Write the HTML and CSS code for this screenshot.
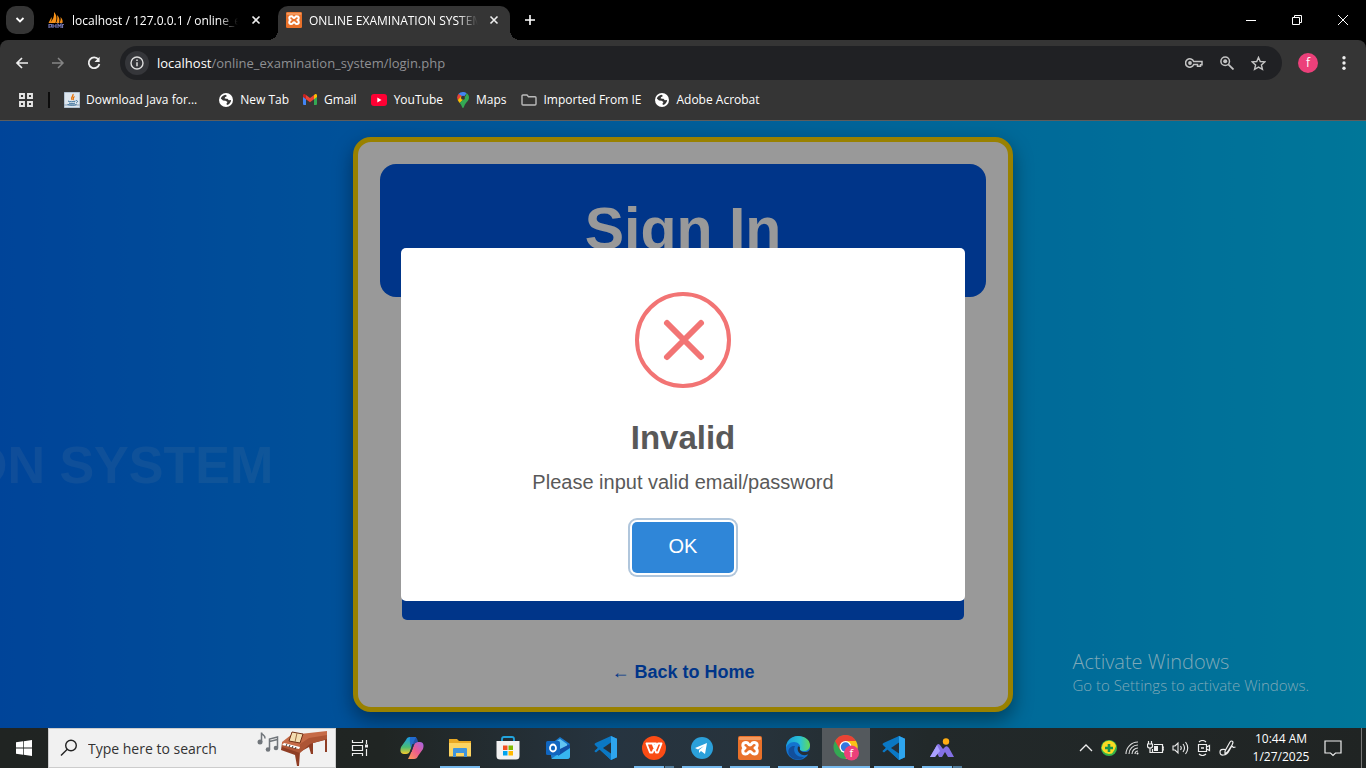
FILE: index.html
```html
<!DOCTYPE html>
<html lang="en">
<head>
<meta charset="utf-8">
<title>ONLINE EXAMINATION SYSTEM</title>
<link rel="stylesheet" href="styles.css">
</head>
<body>
<svg class="defs" width="0" height="0" aria-hidden="true">
  <defs>
    <symbol id="globe" viewBox="0 0 14 14"><circle cx="7" cy="7" r="7" fill="#fff"/><path d="M1.800 5.500C2.500 3.500 4.500 2 6.500 1.800L8 3 6 4.200l-.3 1.300 2.800.2 1.300 1.500 2.300-.2c0 2.500-2 4.700-4.200 5L7.500 10.500 8.500 9 6.500 7.800 4 7.500z" fill="#353535"/><path d="M5.800 4.800l1-.9 1.900.3-.6 1.200z" fill="#fff"/></symbol>
    <symbol id="xampp" viewBox="0 0 24 24"><rect width="24" height="24" rx="2" fill="#e9712a"/><rect x="1" y="1" width="22" height="3" rx="1" fill="#f39a5f"/><path d="M8 6.500C4 6.500 4 11 7 12c-3 1-3 6 .5 6 3 0 2.500-2.500 4.500-2.500s1.500 2.500 4.500 2.500c3.500 0 3.500-5 .5-6 3-1 3-5.500-1-5.500-3 0-2 2.500-4 2.500s-1-2.500-4-2.500z" fill="none" stroke="#fff" stroke-width="3" stroke-linejoin="round"/></symbol>
    <symbol id="vscode" viewBox="0 0 24 24"><path d="M17 0l6 2.700v18.600L17 24 5.500 13.300 2 16l-1.600-1L5 11 .4 8 2 6.800z" fill="#0b78c4"/><path d="M5.500 10.500L17 0v6.500L9 12l8 5.500V24L5.500 13.500 2 16.500.5 15.500 4 12 .5 8.500 2 7.500z" fill="#0b78c4"/><path d="M17 6.500L9 12l8 5.500z" fill="#25303a"/><path d="M17 0l6 2.700v18.600L17 24z" fill="#2ea5ee"/></symbol>
    <symbol id="close" viewBox="0 0 10 10"><path d="M1.500 1.500l7 7m0-7l-7 7" stroke="#eee" stroke-width="1.600"/></symbol>
  </defs>
</svg>

<header class="browser">
  <div class="tabstrip">
    <button class="tab-search" aria-label="Search tabs"><svg width="10" height="8" viewBox="0 0 10 8"><path d="M1.500 2L5 5.500 8.500 2" fill="none" stroke="#fff" stroke-width="1.800"/></svg></button>
    <div class="tab">
      <svg width="16" height="16" viewBox="0 0 16 16"><path d="M6 0c3 3 3 7 1.500 11H2C5 8 6.500 4 6 0zM9 3c2.500 2 3 5 2 8H8c1.500-3 1.500-5 1-8zM12.500 5c2 2 2.500 4 2 6h-3c1-2 1.500-4 1-6zM3.500 5L.5 11H2c1.500-2 2-4 1.500-6z" fill="#f79117"/><path d="M1 16v-3.500h2.500V15H1m4-3v4m0-2h3m0-2v4m2 0v-4l1.500 2 1.500-2v4m1.500 0v-3.500H16" fill="none" stroke="#6d70ab" stroke-width="1.200"/></svg>
      <span class="tab-title">localhost / 127.0.0.1 / online_ex</span>
      <button class="plain tab-close" aria-label="Close tab"><svg width="10" height="10"><use href="#close"/></svg></button>
    </div>
    <div class="tab tab-active">
      <svg width="16" height="16"><use href="#xampp"/></svg>
      <span class="tab-title">ONLINE EXAMINATION SYSTEM</span>
      <button class="plain tab-close" aria-label="Close tab"><svg width="10" height="10"><use href="#close"/></svg></button>
    </div>
    <button class="plain new-tab" aria-label="New tab"><svg width="12" height="12" viewBox="0 0 12 12"><path d="M6 1v10M1 6h10" stroke="#fff" stroke-width="1.600"/></svg></button>
    <div class="window-controls">
      <button class="plain" aria-label="Minimize"><svg width="10" height="10"><path d="M0 5.500h10" stroke="#fff"/></svg></button>
      <button class="plain" aria-label="Restore"><svg width="10" height="10"><path d="M.5 2.500h7v7h-7zM2.500 2.500v-2h7v7h-2" fill="none" stroke="#fff"/></svg></button>
      <button class="plain" aria-label="Close window"><svg width="10" height="10"><path d="M0 0l10 10M10 0L0 10" stroke="#fff"/></svg></button>
    </div>
  </div>

  <div class="toolbar">
    <nav class="nav-buttons">
      <button class="plain" aria-label="Back"><svg width="14" height="12" viewBox="0 0 14 12"><path d="M13 6H2m5-5L2 6l5 5" fill="none" stroke="#eee" stroke-width="1.700"/></svg></button>
      <button class="plain" aria-label="Forward"><svg width="14" height="12" viewBox="0 0 14 12"><path d="M1 6h11M7 1l5 5-5 5" fill="none" stroke="#858585" stroke-width="1.500"/></svg></button>
      <button class="plain" aria-label="Reload"><svg width="14" height="14" viewBox="0 0 14 14"><path d="M11.500 3.600A5.400 5.400 0 1 0 12.400 8" fill="none" stroke="#eee" stroke-width="1.800"/><path d="M12.600.8v5.100H7.500z" fill="#eee"/></svg></button>
    </nav>
    <div class="omnibox">
      <button class="site-info" aria-label="View site information"><svg width="14" height="14" viewBox="0 0 14 14"><circle cx="7" cy="7" r="6" fill="none" stroke="#ddd" stroke-width="1.400"/><path d="M7 6.200v4M7 3.500v1.500" stroke="#ddd" stroke-width="1.500"/></svg></button>
      <p class="url"><b>localhost</b>/online_examination_system/login.php</p>
      <button class="plain" aria-label="Passwords"><svg width="18" height="10" viewBox="0 0 18 10"><path d="M8.700 3.500H17v3.200h-1.500v1.500h-3V6.500H8.700A4.200 4.200 0 1 1 8.700 3.500z" fill="none" stroke="#c4c4c4" stroke-width="1.500"/><circle cx="5" cy="5" r="1.900" fill="#c4c4c4"/></svg></button>
      <button class="plain" aria-label="Zoom"><svg width="14" height="14" viewBox="0 0 14 14"><circle cx="5.200" cy="5.200" r="4.300" fill="none" stroke="#c4c4c4" stroke-width="1.500"/><circle cx="5.200" cy="5.200" r="2" fill="#c4c4c4"/><path d="M8.300 8.300L13.500 13.500" stroke="#c4c4c4" stroke-width="1.800"/></svg></button>
      <button class="plain" aria-label="Bookmark this page"><svg width="15" height="15" viewBox="0 0 16 16"><path d="M8 1.500l1.900 4.400 4.800.4-3.600 3.200 1.100 4.800L8 11.800l-4.200 2.500 1.100-4.800L1.300 6.300l4.800-.4z" fill="none" stroke="#c4c4c4" stroke-width="1.500"/></svg></button>
    </div>
    <button class="avatar" aria-label="Profile">f</button>
    <button class="plain menu" aria-label="Menu"><svg width="4" height="14" viewBox="0 0 4 14"><g fill="#eee"><circle cx="2" cy="1.800" r="1.700"/><circle cx="2" cy="7" r="1.700"/><circle cx="2" cy="12.200" r="1.700"/></g></svg></button>
  </div>

  <nav class="bookmarks">
    <button class="plain apps" aria-label="Apps"><svg width="14" height="14" viewBox="0 0 14 14"><path d="M1 1h4v4H1zM9 1h4v4H9zM1 9h4v4H1zM9 9h4v4H9z" fill="none" stroke="#e4e4e4" stroke-width="1.900"/></svg></button>
    <span class="divider"></span>
    <a class="bookmark bookmark-wide" href="#"><svg width="16" height="16" viewBox="0 0 16 16"><path d="M0 0h16v16H0z" fill="#dde6ee"/><path d="M0 0h16v16H0zM0 13h16" fill="none" stroke="#8ba0b5"/><path d="M9 2c1 2-3 3-1 6M10.500 4.500C8 6 10 7 9 8" fill="none" stroke="#e76f00" stroke-width="1.300"/><path d="M4 9c1 1 6 1 7.500 0M5 11c1 1 5 1 6 0M3.500 12.500c3 1 7 1 9 0M12 8.500c2 0 2 1.500 0 2.500" fill="none" stroke="#39709b"/></svg>Download Java for...</a>
    <a class="bookmark" href="#"><svg width="14" height="14"><use href="#globe"/></svg>New Tab</a>
    <a class="bookmark" href="#"><svg width="14" height="11" viewBox="0 0 14 11"><path d="M0 1.500L3 3v8H1a1 1 0 0 1-1-1z" fill="#4285f4"/><path d="M14 1.500L11 3v8h2a1 1 0 0 0 1-1z" fill="#34a853"/><path d="M11 1l1-.7c1-.7 2 0 2 1.200V3l-3 2.300z" fill="#fbbc04"/><path d="M3 1L2 .3C1 -.4 0 .3 0 1.500V3l3 2.300z" fill="#c5221f"/><path d="M3 1l4 3 4-3v4.300l-4 3-4-3z" fill="#ea4335"/></svg>Gmail</a>
    <a class="bookmark" href="#"><svg width="16" height="12" viewBox="0 0 16 12"><rect width="16" height="12" rx="3" fill="#ff0033"/><path d="M6.300 3.500v5L10.500 6z" fill="#fff"/></svg>YouTube</a>
    <a class="bookmark" href="#"><svg width="12" height="16" viewBox="0 0 12 16"><path d="M6 0a6 6 0 0 0-4.600 2.100L6 6l3.700-4.700A6 6 0 0 0 6 0z" fill="#4285f4"/><path d="M1.400 2.100A6 6 0 0 0 .7 8L5 4z" fill="#ea4335"/><path d="M.7 8c.5 1.100 1.200 2 2 3L9 5 4 4.500z" fill="#fbbc04"/><path d="M9.700 1.300L7.500 6 2.700 11C5 13.500 5 16 6 16s1-2.500 3-5c1.500-1.800 3-3 3-5.500 0-2-1-3.300-2.300-4.200z" fill="#34a853"/><circle cx="6" cy="5.700" r="2" fill="#353535"/></svg>Maps</a>
    <a class="bookmark" href="#"><svg width="16" height="12" viewBox="0 0 16 12"><path d="M1 2a1 1 0 0 1 1-1h4l1.500 1.800H14a1 1 0 0 1 1 1V10a1 1 0 0 1-1 1H2a1 1 0 0 1-1-1z" fill="none" stroke="#bbb" stroke-width="1.400"/></svg>Imported From IE</a>
    <a class="bookmark" href="#"><svg width="14" height="14"><use href="#globe"/></svg>Adobe Acrobat</a>
  </nav>
</header>

<main class="page">
  <div class="marquee" aria-hidden="true">ONLINE EXAMINATION SYSTEM</div>
  <section class="card">
    <h1 class="card-title">Sign In</h1>
    <form class="login-form"><button class="submit" type="submit" aria-label="Sign in"></button></form>
    <p class="back"><a href="#"><span class="arrow">←</span> Back to Home</a></p>
  </section>

  <div class="overlay">
    <div class="modal" role="alertdialog" aria-labelledby="modal-title" aria-describedby="modal-text">
      <svg class="modal-icon" width="96" height="96" viewBox="0 0 96 96"><circle cx="48" cy="48" r="46" fill="none" stroke="#f27474" stroke-width="4"/><path d="M32 31l34 34M66 31L32 65" stroke="#f27474" stroke-width="6" stroke-linecap="round"/></svg>
      <h2 id="modal-title">Invalid</h2>
      <p id="modal-text">Please input valid email/password</p>
      <button class="ok">OK</button>
    </div>
  </div>

  <aside class="activate">
    <strong>Activate Windows</strong>
    <span>Go to Settings to activate Windows.</span>
  </aside>
</main>

<footer class="taskbar">
  <button class="plain task" aria-label="Start"><svg width="16" height="16" viewBox="0 0 16 16"><path d="M0 2.300l7-1v6.300H0zM7.700 1.200L16 0v7.600H7.700zM0 8.400h7v6.300l-7-1zM7.700 8.400H16V16l-8.300-1.200z" fill="#fff"/></svg></button>
  <div class="search">
    <svg width="18" height="18" viewBox="0 0 18 18"><circle cx="11" cy="6.500" r="5.300" fill="none" stroke="#222" stroke-width="1.400"/><path d="M7.300 10.300L1 16.500" stroke="#222" stroke-width="1.400"/></svg>
    <input type="text" placeholder="Type here to search" aria-label="Type here to search">
    <svg width="72" height="36" viewBox="0 0 72 36"><path d="M5.500 12V2.500c0 3 4 2 3.500 6M13.500 19V9l8-2v10.500M13.500 11.500l8-2" fill="none" stroke="#71767b" stroke-width="1.500"/><g fill="#71767b"><circle cx="4" cy="12" r="2.500"/><circle cx="12" cy="19.500" r="2.300"/><circle cx="20" cy="18" r="2.300"/></g><path d="M26 13l-1 7 14 5 2 11h2l1-14 9-5 2 7h2V13l12-3v12h2V4z" fill="#8f3d24"/><path d="M26 12l9-7 36-4v6l-18 4-9 9-18-5z" fill="#c66b48"/><path d="M44 14l9-6 18-3v4l-17 5-10 9-18-6v-3l18 5z" fill="#ad5535"/><path d="M36 2l11 2-3 9-11-2z" fill="#f4ddb1" stroke="#723016"/><path d="M41 3l-2 9" stroke="#9b6c42"/><path d="M28 13l16 4-1 2-17-4z" fill="#fff"/><path d="M31 14l-1 2m4-1l-1 2m4-1l-1 2m4-1l-1 2" stroke="#333"/></svg>
  </div>
  <button class="plain task task-view" aria-label="Task view"><svg width="18" height="18" viewBox="0 0 18 18"><path d="M1.500 1v2.500h10V1M1.500 17v-2.500h10V17M1.500 6.500h10v5h-10zM15.500 1v4M15.500 10v7" fill="none" stroke="#eee" stroke-width="1.200"/><rect x="14" y="5.500" width="3" height="3" fill="#eee"/></svg></button>
  <button class="plain task" aria-label="Copilot"><svg width="24" height="24" viewBox="0 0 24 24"><defs><linearGradient id="cp1" x1="0" y1="0" x2="0" y2="1"><stop offset="0" stop-color="#1a9bea"/><stop offset=".6" stop-color="#4bbd72"/><stop offset="1" stop-color="#f6c92b"/></linearGradient><linearGradient id="cp2" x1="1" y1="0" x2="0" y2="1"><stop offset="0" stop-color="#a165e8"/><stop offset=".5" stop-color="#ec5c8e"/><stop offset="1" stop-color="#ff9c53"/></linearGradient></defs><path d="M6 4q1-3 4-3h6l-2 4-4 10q-1 3-4 3H4c-4 0-4-4-3-7z" fill="url(#cp1)"/><path d="M18 20q-1 3-4 3H8l2-4 4-10q1-3 4-3h2c4 0 4 4 3 7z" fill="url(#cp2)"/><path d="M10 1h5q2 0 3 5-3 0-4 3l-2 5q-3-7-2-13z" fill="#225fcd" opacity=".8"/><path d="M12.500 8l-2.500 8h1.500L14 8z" fill="#263038"/></svg></button>
  <button class="plain task running" aria-label="File Explorer"><svg width="22" height="20" viewBox="0 0 22 20"><path d="M0 1h8l2 2h12v15H0z" fill="#e8a824"/><path d="M0 5h22v13.500H0z" fill="#fcd462"/><path d="M4 19v-8q0-1 1-1h12q1 0 1 1v8h-3v-4H7v4z" fill="#3f94dc"/></svg></button>
  <button class="plain task store" aria-label="Microsoft Store"><svg width="24" height="24" viewBox="0 0 24 24"><path d="M6 7V3q0-2 2-2h8q2 0 2 2v4" fill="none" stroke="#22a4dd" stroke-width="1.800"/><path d="M.5 5h23v15q0 3.500-3.500 3.500H4Q.5 23.500.5 20z" fill="#f2f2f2"/><path d="M7 9.500h4.500V14H7z" fill="#f25022"/><path d="M12.500 9.500H17V14h-4.500z" fill="#7fba00"/><path d="M7 15h4.500v4.500H7z" fill="#00a4ef"/><path d="M12.500 15H17v4.500h-4.500z" fill="#ffb900"/></svg></button>
  <button class="plain task" aria-label="Outlook"><svg width="24" height="22" viewBox="0 0 24 22"><path d="M5 7l9-7 10 7v12q0 3-3 3H8q-3 0-3-3z" fill="#1878cc"/><path d="M8 6l6-4 7 5v6H8z" fill="#62c5f2"/><path d="M5 22l19-13v10q0 3-3 3z" fill="#37b5f0"/><path d="M14 12l10-5v4L12 19z" fill="#124fa5"/><rect y="4" width="14" height="14" rx="1.500" fill="#1066c0"/><ellipse cx="7" cy="11" rx="3" ry="3.500" fill="none" stroke="#fff" stroke-width="1.800"/></svg></button>
  <button class="plain task" aria-label="Visual Studio Code"><svg width="24" height="24"><use href="#vscode"/></svg></button>
  <button class="plain task running stacked" aria-label="WPS Office"><svg width="24" height="24" viewBox="0 0 24 24"><circle cx="12" cy="12" r="12" fill="#fa4c15"/><path d="M4.500 7.500H14l-3.500 9H8zM10.500 7.500L14 16.500h2l3.500-9H16l-2.500 6" fill="none" stroke="#fff" stroke-width="1.900" stroke-linejoin="round"/></svg></button>
  <button class="plain task running" aria-label="Telegram"><svg width="22" height="22" viewBox="0 0 22 22"><circle cx="11" cy="11" r="11" fill="#2ba0da"/><path d="M4 11l12-5-2 11-4-3-2 2v-3l5-4-6 3.500z" fill="#fff"/></svg></button>
  <button class="plain task running" aria-label="XAMPP"><svg width="24" height="24"><use href="#xampp"/></svg></button>
  <button class="plain task running" aria-label="Microsoft Edge"><svg width="24" height="24" viewBox="0 0 24 24"><defs><linearGradient id="ed"><stop offset="0" stop-color="#179bdc"/><stop offset=".6" stop-color="#2bc3d2"/><stop offset="1" stop-color="#63d957"/></linearGradient></defs><circle cx="12" cy="12" r="12" fill="#1373ce"/><path d="M0 12C0 5 5 0 12 0s12 4 12 9c0 4-3 6-6 6-4 0-5-1-4-3 1-3-2-6-6-6-4 0-7 3-8 6z" fill="url(#ed)"/><path d="M9 10c-3 6 2 12 9 11-4 4-11 3-14-1C0 15 4 9 9 10z" fill="#124f9c"/><path d="M14 12c-1 3 3 5 8 3.500l2-2V19l-2.500-.5C16 21 10 16 12 10.500q2-.5 2 1.500z" fill="#263038"/></svg></button>
  <button class="plain task running active" aria-label="Google Chrome"><svg width="26" height="26" viewBox="0 0 26 26"><circle cx="12.500" cy="12" r="12" fill="#34a853"/><path d="M2.100 6A12 12 0 0 1 23 6H12.500L7 15z" fill="#ea4335"/><path d="M23 6a12 12 0 0 1-10.500 18l6-10.500L12.500 6z" fill="#fbc116"/><circle cx="12.500" cy="12" r="6" fill="#fff"/><circle cx="12.500" cy="12" r="4.700" fill="#3477df"/><circle cx="18.500" cy="18" r="7.500" fill="#ec407a"/><text x="16.500" y="22" class="badge-letter">f</text></svg></button>
  <button class="plain task running" aria-label="Visual Studio Code"><svg width="24" height="24"><use href="#vscode"/></svg></button>
  <button class="plain task running stacked" aria-label="Photos"><svg width="24" height="20" viewBox="0 0 24 20"><path d="M0 19L7 7q1-2 3 0l3 4 2-2q2-2 4 1l5 9h-6l-3-5-3 5H9l-2-4-2 4z" fill="#8471e5"/><path d="M0 19L7 7l3 6-5 6z" fill="#aaa0ff"/><circle cx="16" cy="3.500" r="3.200" fill="#ffac12"/></svg></button>

  <div class="tray">
    <button class="plain" aria-label="Show hidden icons"><svg width="14" height="8" viewBox="0 0 14 8"><path d="M1 7l6-6 6 6" fill="none" stroke="#eee" stroke-width="1.300"/></svg></button>
    <svg width="16" height="16" viewBox="0 0 16 16"><circle cx="8" cy="8" r="8" fill="#35b34a"/><path d="M2 3.500A7.500 7.500 0 0 1 15 6q-1 4-4 7.500Q5 15 2 11L.500 8z" fill="#f9db22"/><path d="M8 4v8M4 8h8" stroke="#15934b" stroke-width="2.600"/></svg>
    <svg width="14" height="14" viewBox="0 0 14 14"><path d="M1 13A12 12 0 0 1 13 1M4 13a9 9 0 0 1 9-9M7 13a6 6 0 0 1 6-6M10 13a3 3 0 0 1 3-3" fill="none" stroke="#ddd" stroke-width="1.100"/><circle cx="12.500" cy="12.500" r="1" fill="#eee"/></svg>
    <svg width="17" height="14" viewBox="0 0 17 14"><path d="M7 3.500h8.500v8H5.500V8M15.500 6H17v3h-1.500M1.500 0v3M4.500 0v3M.5 3h5v2q0 2-2.500 2T.5 5zM3 7v4.500h2" fill="none" stroke="#eee" stroke-width="1.200"/><path d="M7 5h4v5H7z" fill="#eee"/></svg>
    <svg width="17" height="14" viewBox="0 0 17 14"><path d="M1 5h2l3-3v10L3 9H1zM8.500 5q1.500 2 0 4M11 3q3 4 0 8M13.500 1q4.500 6 0 12" fill="none" stroke="#eee" stroke-width="1.100"/></svg>
    <svg width="14" height="16" viewBox="0 0 14 16"><path d="M1.500 4.500h8v7h-8zM9.500 7l3-1.500v5l-3-1.500M2 2Q5.500-1 9 2M2 14q3.500 3 7 0" fill="none" stroke="#eee" stroke-width="1.200"/><path d="M4 7h3v2H4z" fill="#bbb"/></svg>
    <svg width="17" height="16" viewBox="0 0 17 16"><path d="M6 11L11 2q1.500-2 3 0 0 1-1 3L8.500 12 6 14zM6.500 9.500Q1 8.500 1 12t3.500 3Q8 15 10.500 10t3-3.500 3 .5" fill="none" stroke="#eee" stroke-width="1.200"/></svg>
    <time class="clock" datetime="2025-01-27T10:44"><span>10:44 AM</span><span>1/27/2025</span></time>
    <button class="plain" aria-label="Notifications"><svg width="18" height="17" viewBox="0 0 18 17"><path d="M1 1h16v12h-5.500L9 15.500 6.500 13H1z" fill="none" stroke="#eee" stroke-width="1.200"/></svg></button>
  </div>
</footer>
</body>
</html>
```

FILE: styles.css
```css
* { box-sizing: border-box; }
body {
  margin: 0;
  min-height: 100vh;
  display: flex;
  flex-direction: column;
  font-family: "Open Sans", "Noto Sans", sans-serif;
  font-size: 12px;
  overflow: hidden;
}
h1, h2, p { margin: 0; }
button { font: inherit; }
svg { flex: none; display: block; }
.defs { position: absolute; }
.plain {
  display: flex;
  align-items: center;
  justify-content: center;
  flex: none;
  padding: 0;
  border: 0;
  background: none;
}

/* Browser frame */
.browser { background: #000; color: #fff; }
.tabstrip { display: flex; height: 40px; align-items: center; padding-left: 6px; }
.tab-search {
  display: flex;
  align-items: center;
  justify-content: center;
  width: 28px;
  height: 28px;
  padding: 0;
  border: 0;
  border-radius: 10px;
  background: #353535;
}
.tab { display: flex; align-items: center; gap: 8px; width: 232px; margin-left: 6px; padding: 0 7px 0 8px; }
.tab-title {
  flex: 1;
  overflow: hidden;
  white-space: nowrap;
  mask-image: linear-gradient(to right, #000 88%, transparent);
}
.tab-close { width: 18px; height: 20px; }
.tab:not(.tab-active) .tab-close { margin-left: 1px; }
.tab-active {
  position: relative;
  align-self: flex-end;
  gap: 7px;
  height: 34px;
  padding-bottom: 6px;
  border-radius: 10px 10px 0 0;
  background: #353535;
}
.tab-active::before, .tab-active::after {
  content: "";
  position: absolute;
  bottom: 0;
  width: 10px;
  height: 10px;
}
.tab-active::before { right: 100%; background: radial-gradient(circle at 0 0, #000 10px, #353535 10px); }
.tab-active::after { left: 100%; background: radial-gradient(circle at 100% 0, #000 10px, #353535 10px); }
.new-tab { width: 40px; height: 28px; }
.window-controls { display: flex; margin-left: auto; height: 40px; }
.window-controls .plain { width: 46px; }

.toolbar {
  display: flex;
  align-items: center;
  height: 46px;
  padding: 0 12px 0 4px;
  border-radius: 8px 8px 0 0;
  background: #353535;
}
.nav-buttons { display: flex; margin-right: 8px; }
.nav-buttons .plain { width: 36px; height: 34px; }
.omnibox {
  flex: 1;
  display: flex;
  align-items: center;
  height: 34px;
  padding: 0 16px 0 5px;
  gap: 17px;
  border-radius: 17px;
  background: #202124;
}
.site-info {
  display: flex;
  align-items: center;
  justify-content: center;
  width: 24px;
  height: 24px;
  padding: 0;
  border: 0;
  border-radius: 50%;
  background: #35363a;
}
.url { flex: 1; margin-left: -9px; font-size: 13px; color: #8f9093; }
.url b { font-weight: 400; color: #fff; }
.avatar {
  width: 20px;
  height: 20px;
  margin: 0 16px;
  padding: 0;
  border: 0;
  border-radius: 50%;
  background: #ec407a;
  color: #fff;
  font-size: 12px;
  line-height: 20px;
}
.menu { width: 20px; height: 20px; }

.bookmarks {
  display: flex;
  align-items: center;
  height: 35px;
  padding: 0 19px 7px;
  border-bottom: 1px solid #5d5d5d;
  background: #353535;
}
.divider { width: 2px; height: 16px; margin: 0 14px 0 15px; background: #0c0c0c; }
.bookmark {
  display: flex;
  align-items: center;
  gap: 7px;
  margin-right: 14px;
  color: #fff;
  text-decoration: none;
  white-space: nowrap;
}
.bookmark-wide { gap: 6px; margin-right: 22px; }

/* Login page */
.page {
  position: relative;
  flex: 1;
  padding: 16px;
  overflow: hidden;
  background: linear-gradient(to right, #0072ff, #00c6ff);
  font-family: "Liberation Sans", Arial, sans-serif;
}
.marquee {
  position: absolute;
  top: 314px;
  right: 80%;
  font-size: 52px;
  line-height: 60px;
  font-weight: 700;
  white-space: nowrap;
  color: rgba(255, 255, 255, .1);
}
.card {
  position: relative;
  display: flex;
  flex-direction: column;
  width: 660px;
  height: 575px;
  margin: 0 auto;
  padding: 22px;
  border: 5px solid #ffd700;
  border-radius: 18px;
  background: #fff;
  box-shadow: 0 8px 20px rgba(0, 0, 0, .4);
}
.card-title {
  padding: 32px 32px 34px;
  border-radius: 16px;
  background: #0059e5;
  color: #fff;
  font-size: 59px;
  line-height: 67px;
  text-align: center;
}
.login-form { flex: 1; display: flex; align-items: flex-end; padding: 0 22px; }
.submit { width: 100%; height: 50px; border: 0; border-radius: 5px; background: #0059e5; }
.back { padding-top: 40px; text-align: center; font-size: 18px; line-height: 25px; font-weight: 700; }
.back a { color: #0059e5; text-decoration: none; }
.arrow { font-family: "Liberation Serif", serif; font-weight: 400; }

.overlay {
  position: absolute;
  inset: 0;
  display: flex;
  align-items: center;
  justify-content: center;
  background: rgba(0, 0, 0, .4);
}
.modal {
  display: flex;
  flex-direction: column;
  align-items: center;
  width: 564px;
  padding: 44px 20px 28px;
  border-radius: 5px;
  background: #fff;
  color: #595959;
}
.modal h2 { margin-top: 30px; font-size: 33px; line-height: 40px; }
.modal p { margin-top: 12px; font-size: 20px; line-height: 24px; }
.ok {
  width: 102px;
  height: 51px;
  margin-top: 28px;
  padding: 0 0 2px;
  border: 0;
  border-radius: 5px;
  background: #2f86d8;
  box-shadow: 0 0 0 2px #fff, 0 0 0 4px #b0c6dc;
  color: #fff;
  font-size: 20px;
}

.activate {
  position: absolute;
  right: 57px;
  bottom: 33px;
  display: flex;
  flex-direction: column;
  color: #7fa9b8;
  font-family: "Open Sans", "Noto Sans", sans-serif;
  font-size: 15px;
  line-height: 20px;
  font-weight: 300;
}
.activate strong { font-size: 20px; line-height: 26px; font-weight: 300; }

/* Taskbar */
.taskbar {
  display: flex;
  height: 40px;
  background: linear-gradient(to right, #202422, #202523 28%, #263440 45%, #27333c 55%, #22292a 68%, #202423);
  color: #fff;
}
.task { position: relative; width: 48px; }
.task-view { margin-right: 4px; }
.store { margin-right: 2px; }
.running::after {
  content: "";
  position: absolute;
  left: 4px;
  right: 4px;
  bottom: 0;
  height: 2px;
  background: #76b9ed;
}
.stacked::after { background: linear-gradient(to right, #76b9ed 30px, #27333c 30px 31px, #527c9b 31px); }
.active { background: #54595d; }
.active::after { left: 0; right: 0; }
.badge-letter { font-size: 11px; fill: #fff; }
.search {
  display: flex;
  align-items: center;
  width: 288px;
  padding: 0 7px 0 11px;
  border: 1px solid #ccc;
  background: #f1f1f1;
}
.search input {
  flex: 1;
  min-width: 0;
  margin-left: 10px;
  padding: 0;
  border: 0;
  outline: 0;
  background: none;
  font: 14px "Open Sans", "Noto Sans", sans-serif;
}
.search input::placeholder { color: #333; opacity: 1; }
.tray {
  display: flex;
  align-items: center;
  gap: 8px;
  margin-left: auto;
  margin-right: 4px;
  padding-right: 19px;
  border-right: 1px solid #777;
}
.clock { display: flex; flex-direction: column; width: 60px; margin: 0 5px 0 7px; text-align: center; line-height: 18px; }
```
